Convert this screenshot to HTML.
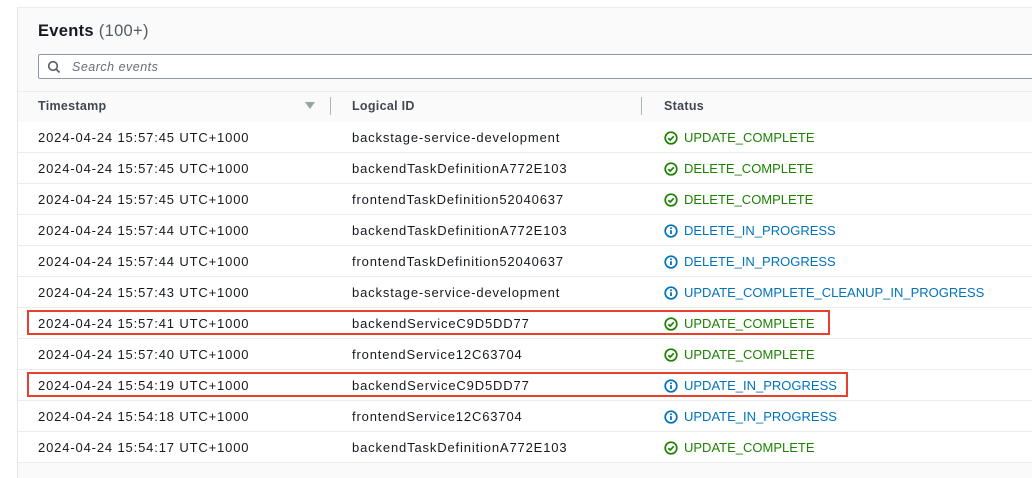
<!DOCTYPE html>
<html><head><meta charset="utf-8"><style>
body{margin:0;width:1032px;height:467px;overflow:hidden;background:#fff;font-family:"Liberation Sans",sans-serif;position:relative}
.panel{position:absolute;left:17px;top:7px;width:1020px;height:470px;background:#fafafa;border-left:1px solid #e4e4e4;border-top:1px solid #ececec}
.t{position:absolute;font-size:13px;color:#16191f;white-space:nowrap}
.w{letter-spacing:0.85px}
.h{font-weight:bold;color:#414750;font-size:12.5px;letter-spacing:0.3px}
.row{position:absolute;left:18px;width:1014px;height:30px;background:#fff;border-bottom:1px solid #eaeded}
.g{color:#1d8102}.b{color:#0073bb}
.ic{display:inline-block;vertical-align:-3px;margin-right:6px}
.red{position:absolute;border:2px solid #e8402a;box-sizing:border-box}
</style></head><body>
<div class="panel"></div>
<div class="t" style="left:38px;top:22px;font-size:16.5px;font-weight:bold;letter-spacing:0.3px">Events <span style="font-weight:normal;color:#545b64">(100+)</span></div>
<div style="position:absolute;left:38px;top:54px;width:1000px;height:25px;border:1px solid #8d99a8;border-radius:2px;background:#fff;box-sizing:border-box"></div>
<svg style="position:absolute;left:47px;top:60px" width="14" height="14" viewBox="0 0 14 14"><circle cx="6" cy="6" r="4.3" fill="none" stroke="#545b64" stroke-width="1.6"/><path d="M9.2 9.2L12.5 12.5" stroke="#545b64" stroke-width="1.6"/></svg>
<div class="t" style="left:72px;top:60px;font-style:italic;color:#687078;font-size:12.5px;letter-spacing:0.5px">Search events</div>
<div style="position:absolute;left:18px;top:91px;width:1014px;height:30px;background:#fafafa;border-top:1px solid #eaeded;border-bottom:1px solid #eaeded"></div>
<div class="t h" style="left:38px;top:99px">Timestamp</div>
<div style="position:absolute;left:305px;top:102px;width:0;height:0;border-left:5px solid transparent;border-right:5px solid transparent;border-top:7px solid #95a5a6"></div>
<div style="position:absolute;left:330px;top:97px;width:1px;height:18px;background:#aab7b8"></div>
<div class="t h" style="left:352px;top:99px">Logical ID</div>
<div style="position:absolute;left:641px;top:97px;width:1px;height:18px;background:#aab7b8"></div>
<div class="t h" style="left:664px;top:99px">Status</div>
<div id="rows"></div>
<div class="red" style="left:27px;top:310px;width:803px;height:25px"></div>
<div class="red" style="left:27px;top:372px;width:821px;height:25px"></div>
<script>
var d=[["15:57:45","backstage-service-development","UPDATE_COMPLETE",1],
["15:57:45","backendTaskDefinitionA772E103","DELETE_COMPLETE",1],
["15:57:45","frontendTaskDefinition52040637","DELETE_COMPLETE",1],
["15:57:44","backendTaskDefinitionA772E103","DELETE_IN_PROGRESS",0],
["15:57:44","frontendTaskDefinition52040637","DELETE_IN_PROGRESS",0],
["15:57:43","backstage-service-development","UPDATE_COMPLETE_CLEANUP_IN_PROGRESS",0],
["15:57:41","backendServiceC9D5DD77","UPDATE_COMPLETE",1],
["15:57:40","frontendService12C63704","UPDATE_COMPLETE",1],
["15:54:19","backendServiceC9D5DD77","UPDATE_IN_PROGRESS",0],
["15:54:18","frontendService12C63704","UPDATE_IN_PROGRESS",0],
["15:54:17","backendTaskDefinitionA772E103","UPDATE_COMPLETE",1]];
var ok='<svg class="ic" width="14" height="14" viewBox="0 0 14 14"><circle cx="7" cy="7" r="5.8" fill="none" stroke="#1d8102" stroke-width="1.7"/><path d="M4.3 7.2L6.2 9L9.8 5.3" fill="none" stroke="#1d8102" stroke-width="1.7"/></svg>';
var inf='<svg class="ic" width="14" height="14" viewBox="0 0 14 14"><circle cx="7" cy="7" r="5.8" fill="none" stroke="#0073bb" stroke-width="1.7"/><path d="M7 6.2V10" stroke="#0073bb" stroke-width="1.8"/><circle cx="7" cy="4.3" r="1" fill="#0073bb"/></svg>';
var h='';
d.forEach(function(r,i){var y=122+i*31;
h+='<div class="row" style="top:'+y+'px"></div>';
h+='<div class="t w" style="left:38px;top:'+(y+8)+'px">2024-04-24 '+r[0]+' UTC+1000</div>';
h+='<div class="t w" style="left:352px;top:'+(y+8)+'px">'+r[1]+'</div>';
h+='<div class="t '+(r[3]?'g':'b')+'" style="left:664px;top:'+(y+8)+'px">'+(r[3]?ok:inf)+r[2]+'</div>';});
document.getElementById('rows').innerHTML=h;
</script>
</body></html>
